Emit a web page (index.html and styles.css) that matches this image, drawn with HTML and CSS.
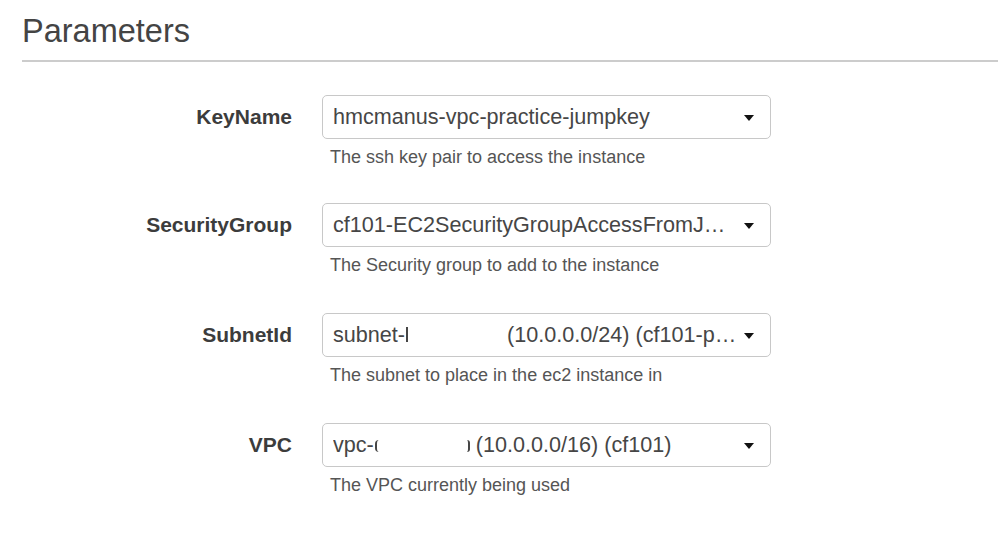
FILE: index.html
```html
<!DOCTYPE html>
<html lang="en">
<head>
<meta charset="utf-8">
<title>Parameters</title>
<link rel="stylesheet" href="styles.css">
</head>
<body>
<div class="page">
  <h1 class="title">Parameters</h1>
  <div class="form">
    <div class="label">KeyName</div>
    <div class="select"><span class="value">hmcmanus-vpc-practice-jumpkey</span><span class="caret"></span></div>
    <div class="help help-first">The ssh key pair to access the instance</div>

    <div class="label">SecurityGroup</div>
    <div class="select"><span class="value">cf101-EC2SecurityGroupAccessFromJ…</span><span class="caret"></span></div>
    <div class="help">The Security group to add to the instance</div>

    <div class="label">SubnetId</div>
    <div class="select"><span class="value">subnet-<span class="frag frag-bar"></span><span class="redact redact-subnet"></span>(10.0.0.0/24) (cf101-p…</span><span class="caret"></span></div>
    <div class="help">The subnet to place in the ec2 instance in</div>

    <div class="label">VPC</div>
    <div class="select"><span class="value">vpc-<span class="frag frag-left"></span><span class="redact redact-vpc"></span><span class="frag frag-right"></span> (10.0.0.0/16) (cf101)</span><span class="caret"></span></div>
    <div class="help">The VPC currently being used</div>
  </div>
</div>
</body>
</html>
```
FILE: styles.css
```css
html, body {
  margin: 0;
  padding: 0;
  background: #ffffff;
}
body {
  font-family: "Liberation Sans", Arial, Helvetica, sans-serif;
  color: #444444;
}
.page {
  width: 998px;
  height: 560px;
  overflow: hidden;
}
.title {
  margin: 0 0 0 22px;
  padding: 13px 0 10px 0;
  font-size: 32.5px;
  font-weight: normal;
  line-height: 37px;
  color: #444444;
  border-bottom: 2px solid #cccccc;
}
.form {
  display: grid;
  grid-template-columns: 292px 449px;
  column-gap: 30px;
  padding-top: 33px;
}
.label {
  height: 44px;
  display: flex;
  align-items: center;
  justify-content: flex-end;
  font-size: 21px;
  font-weight: bold;
  color: #3c3c3c;
}
.select {
  grid-column: 2;
  box-sizing: border-box;
  height: 44px;
  border: 1px solid #c8c8c8;
  border-radius: 5px;
  display: flex;
  align-items: center;
  padding: 0 16px 0 10px;
  font-size: 21.6px;
  color: #464646;
  white-space: nowrap;
}
.value {
  flex: 1;
  overflow: hidden;
}
.caret {
  width: 0;
  height: 0;
  border-left: 5px solid transparent;
  border-right: 5px solid transparent;
  border-top: 6px solid #111111;
  margin-top: 1px;
}
.help {
  grid-column: 2;
  margin: 7px 0 37px 8px;
  font-size: 18px;
  line-height: 22px;
  color: #555555;
}
.help-first {
  margin-bottom: 35px;
}
.frag {
  display: inline-block;
  box-sizing: border-box;
  vertical-align: baseline;
}
.frag-bar {
  width: 2px;
  height: 15px;
  background: #464646;
  margin-left: 1px;
}
.frag-left {
  width: 4px;
  height: 12px;
  margin-left: 1px;
  border-left: 2px solid #464646;
  border-top-left-radius: 5px;
  border-bottom-left-radius: 5px;
}
.frag-right {
  width: 3px;
  height: 12px;
  border-right: 2px solid #464646;
  border-top-right-radius: 3px;
  border-bottom-right-radius: 3px;
}
.redact {
  display: inline-block;
}
.redact-subnet {
  width: 99px;
}
.redact-vpc {
  width: 88px;
}
```
